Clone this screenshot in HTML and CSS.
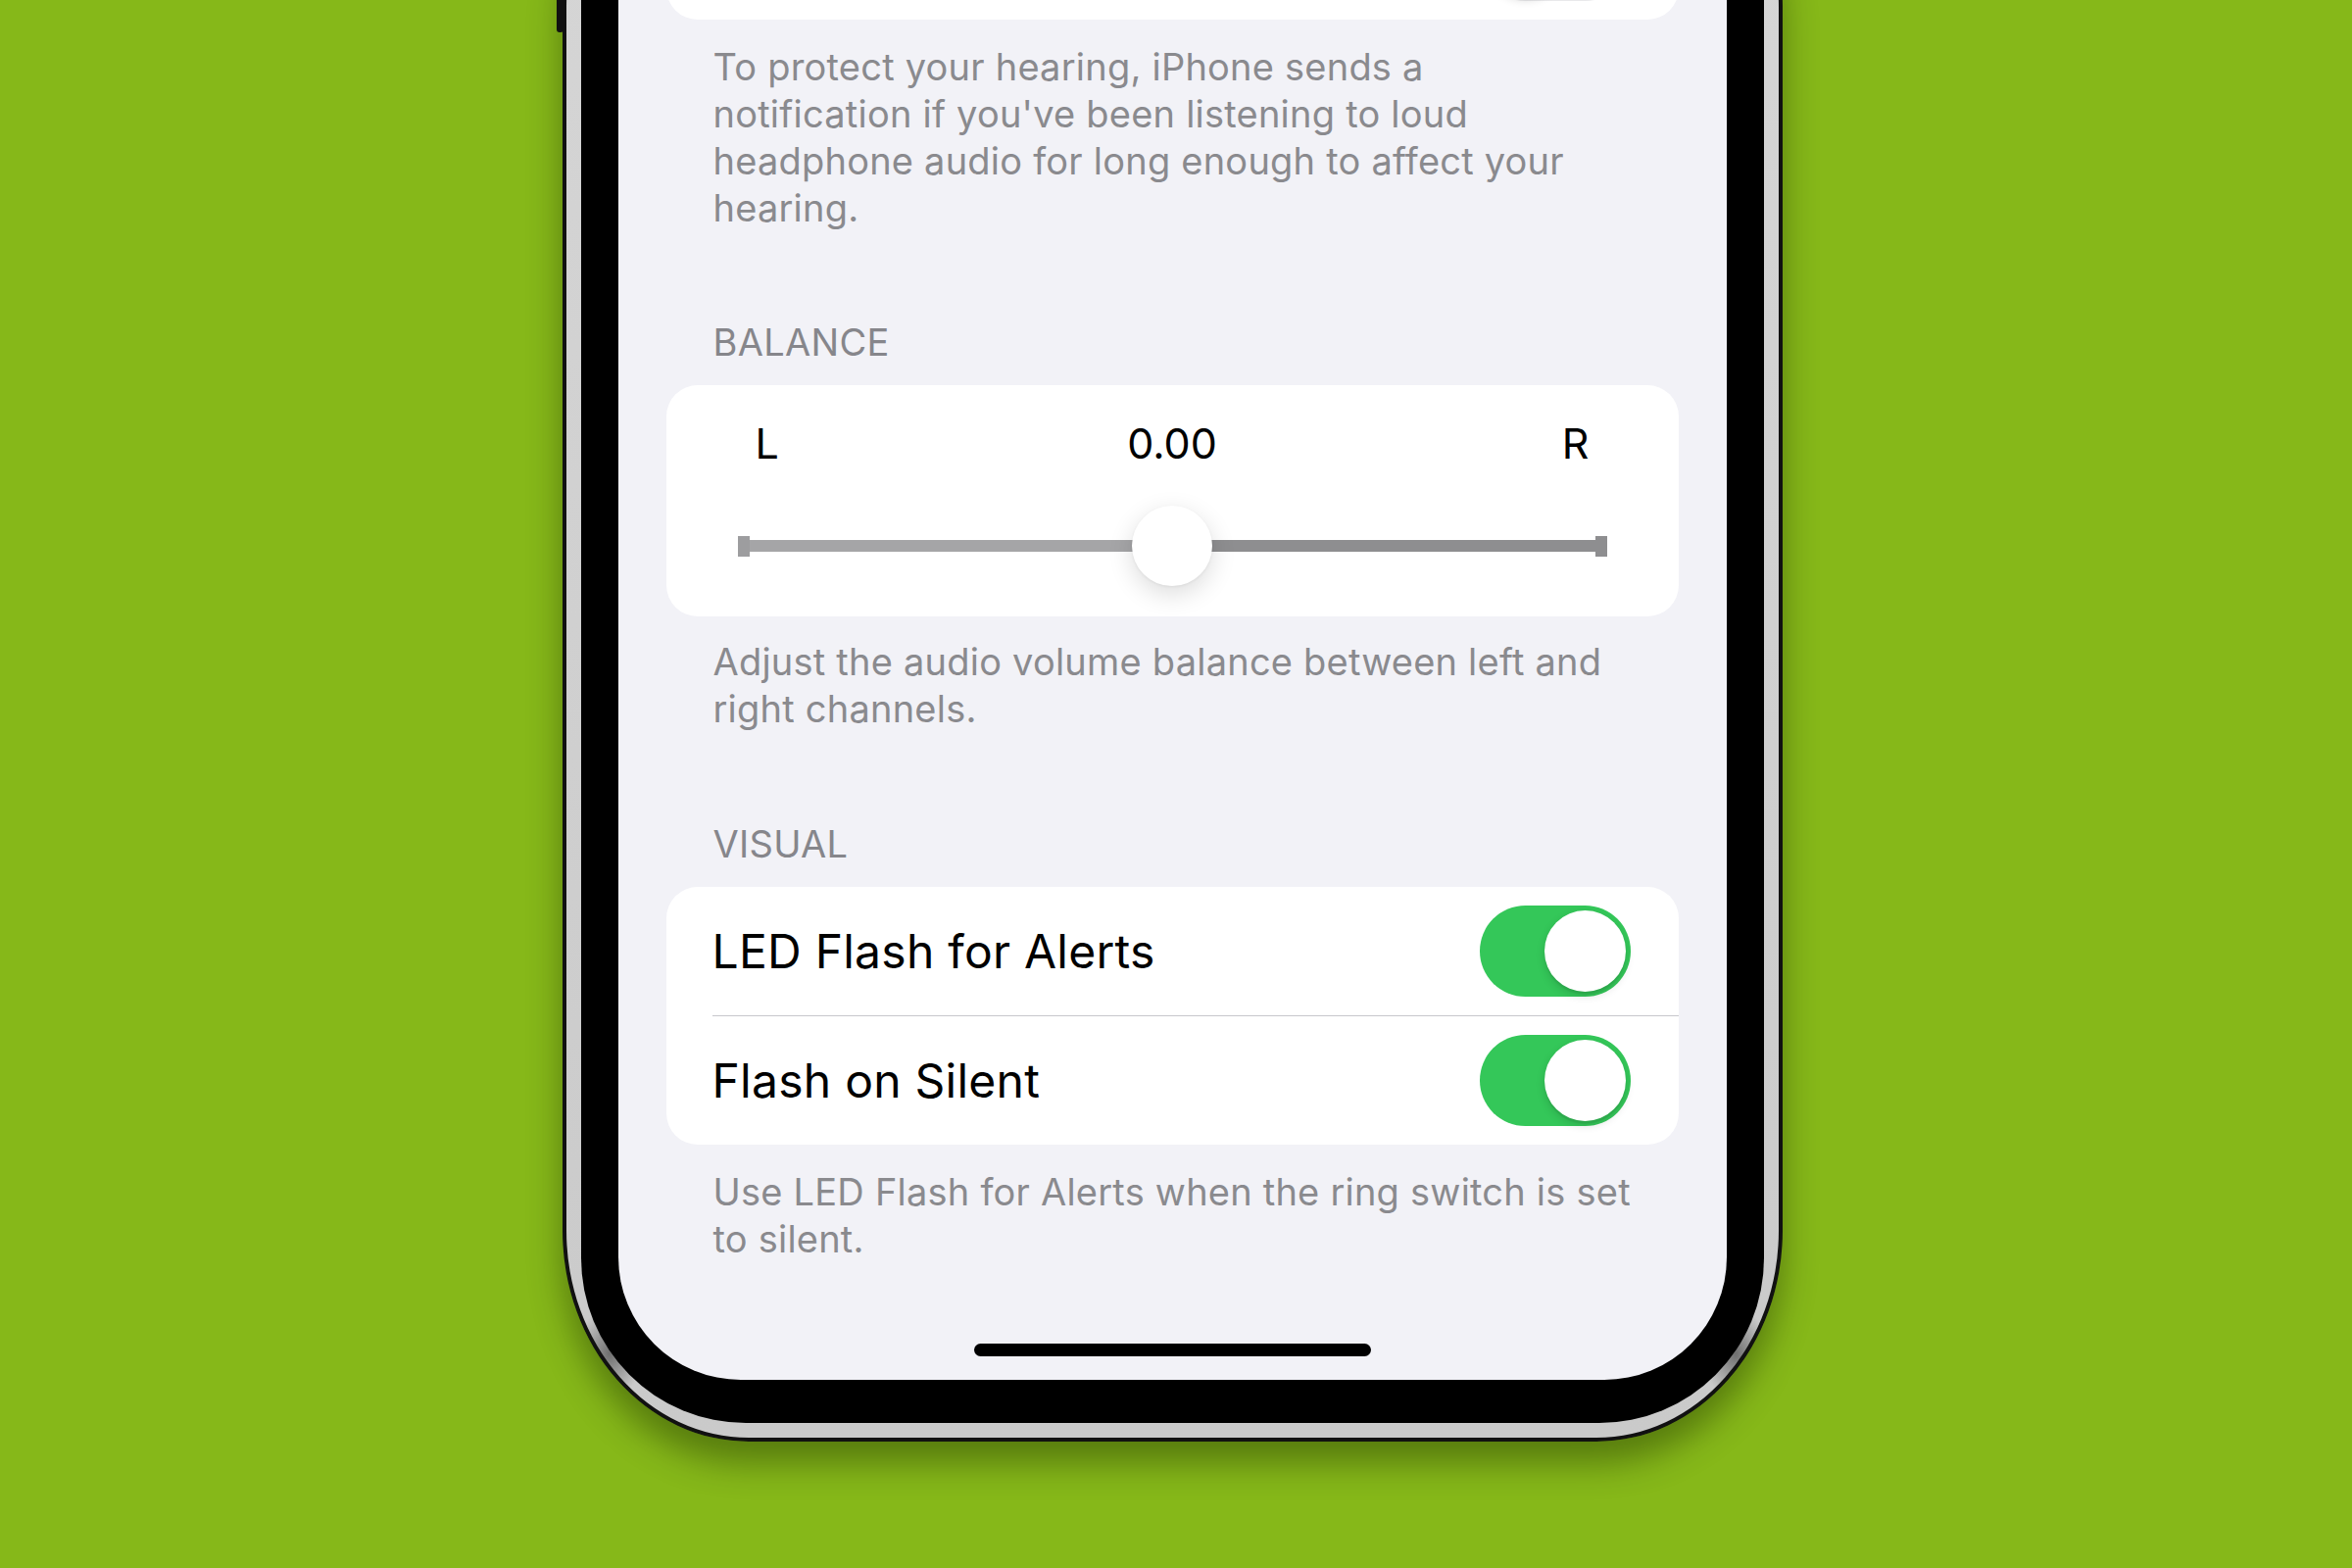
FILE: index.html
```html
<!DOCTYPE html>
<html lang="en">
<head>
    <meta charset="UTF-8">
    <meta name="viewport" content="width=device-width, initial-scale=1.0">
    <title>Audio &amp; Visual</title>
    <link rel="stylesheet" href="styles.css">
</head>
<body>
    <div class="phone">
        <span class="side-button"></span>
        <div class="bezel">
            <div class="screen">
                <div class="card">
                    <div class="row">
                        <span class="row-label"></span>
                        <span class="switch"></span>
                    </div>
                </div>
                <p class="footnote">To protect your hearing, iPhone sends a<br>notification if you've been listening to loud<br>headphone audio for long enough to affect your<br>hearing.</p>

                <div class="group-header">BALANCE</div>
                <div class="card balance">
                    <div class="balance-labels">
                        <span class="balance-l">L</span>
                        <span class="balance-value">0.00</span>
                        <span class="balance-r">R</span>
                    </div>
                    <div class="slider">
                        <span class="tick"></span>
                        <span class="track track-left"></span>
                        <span class="track track-right"></span>
                        <span class="tick"></span>
                        <span class="thumb"></span>
                    </div>
                </div>
                <p class="footnote">Adjust the audio volume balance between left and<br>right channels.</p>

                <div class="group-header">VISUAL</div>
                <div class="card">
                    <div class="row">
                        <span class="row-label">LED Flash for Alerts</span>
                        <span class="switch on"></span>
                    </div>
                    <div class="row">
                        <span class="row-label">Flash on Silent</span>
                        <span class="switch on"></span>
                    </div>
                </div>
                <p class="footnote">Use LED Flash for Alerts when the ring switch is set<br>to silent.</p>

                <div class="home-indicator"></div>
            </div>
        </div>
    </div>
</body>
</html>
```

FILE: styles.css
```css
* {
    box-sizing: border-box;
}

body {
    margin: 0;
    height: 100vh;
    overflow: hidden;
    background-color: #86b819;
    font-family: Inter, "Noto Sans", sans-serif;
    display: flex;
    flex-direction: column;
    align-items: center;
    justify-content: flex-end; /* phone sits low, its top runs off the page */
    padding-bottom: 129px;
}

/* ---------- phone body ---------- */

.phone {
    position: relative;
    margin-right: 8px;
    border: 4px solid #111;
    border-radius: 190px / 215px;
    padding: 15px;
    background:
        radial-gradient(ellipse 34px 46px at 44px calc(100% - 86px), #6f6f6f, rgba(120, 120, 120, 0) 100%),
        radial-gradient(ellipse 34px 46px at calc(100% - 44px) calc(100% - 86px), #6f6f6f, rgba(120, 120, 120, 0) 100%),
        linear-gradient(180deg, #d6d6d6, #cacaca);
    box-shadow: 0 22px 34px rgba(30, 50, 0, 0.45);
}

.side-button {
    position: absolute;
    left: -10px;
    bottom: 1434px;
    width: 7px;
    height: 180px;
    border-radius: 3px;
    background-color: #111;
}

.bezel {
    background-color: #000;
    border-radius: 168px;
    padding: 38px 38px 44px;
}

.screen {
    width: 1131px;
    background-color: #f2f2f7;
    border-radius: 125px;
    padding: 40px 49px 24px;
    display: flex;
    flex-direction: column;
}

/* ---------- grouped list ---------- */

.card {
    background-color: #fff;
    border-radius: 32px;
    overflow: hidden;
}

.row {
    height: 131px;
    display: flex;
    align-items: center;
    justify-content: space-between;
    padding: 0 49px 0 47px;
}

.row + .row {
    height: 132px;
    border-top: 1px solid #c8c8cc;
    margin-left: 47px;
    padding-left: 0;
}

.row-label {
    font-size: 48px;
    line-height: 60px;
    color: #000;
    letter-spacing: 0.25px;
}

.footnote {
    margin: 24px 0 0;
    padding: 0 48px;
    font-size: 38px;
    line-height: 48px;
    color: #8a8a8e;
    white-space: nowrap;
    letter-spacing: 0.22px;
}

.card.balance + .footnote {
    margin-top: 22px;
}

.group-header {
    margin-top: 89px;
    margin-bottom: 20px;
    padding: 0 48px;
    font-size: 38px;
    line-height: 48px;
    color: #86868b;
    letter-spacing: 0.3px;
}

.footnote + .group-header + .card + .footnote + .group-header {
    margin-top: 90px;
}

/* ---------- switches ---------- */

.switch {
    flex: none;
    width: 154px;
    height: 93px;
    border-radius: 47px;
    background-color: #e9e9eb;
    position: relative;
}

.switch::after {
    content: "";
    position: absolute;
    top: 5px;
    left: 5px;
    width: 83px;
    height: 83px;
    border-radius: 50%;
    background-color: #fff;
    box-shadow: 0 4px 10px rgba(0, 0, 0, 0.15), 0 3px 1px rgba(0, 0, 0, 0.05);
}

.switch.on {
    background-color: #34c759;
}

.switch.on::after {
    left: auto;
    right: 5px;
}

/* ---------- balance slider ---------- */

.balance {
    padding: 33px 0 31px;
}

.balance-labels {
    display: grid;
    grid-template-columns: 1fr auto 1fr;
    padding: 0 91px;
    font-size: 43px;
    line-height: 52px;
    color: #000;
}

.balance-r {
    text-align: right;
}

.slider {
    position: relative;
    margin-top: 38px;
    height: 82px;
    padding: 0 73px;
    display: flex;
    align-items: center;
}

.tick {
    width: 12px;
    height: 21px;
    background-color: #8e8e90;
}

.tick:first-child {
    background-color: #9d9d9f;
}

.track {
    flex: 1;
    height: 12px;
}

.track-left {
    background-color: #a5a5a7;
}

.track-right {
    background-color: #8e8e90;
}

.thumb {
    position: absolute;
    left: 50%;
    top: 0;
    width: 82px;
    height: 82px;
    margin-left: -41px;
    border-radius: 50%;
    background-color: #fff;
    box-shadow: 0 8px 26px rgba(0, 0, 0, 0.14), 0 1px 3px rgba(0, 0, 0, 0.06);
}

/* ---------- home indicator ---------- */

.home-indicator {
    align-self: center;
    width: 405px;
    height: 13px;
    margin-top: 83px;
    border-radius: 7px;
    background-color: #000;
}
```
